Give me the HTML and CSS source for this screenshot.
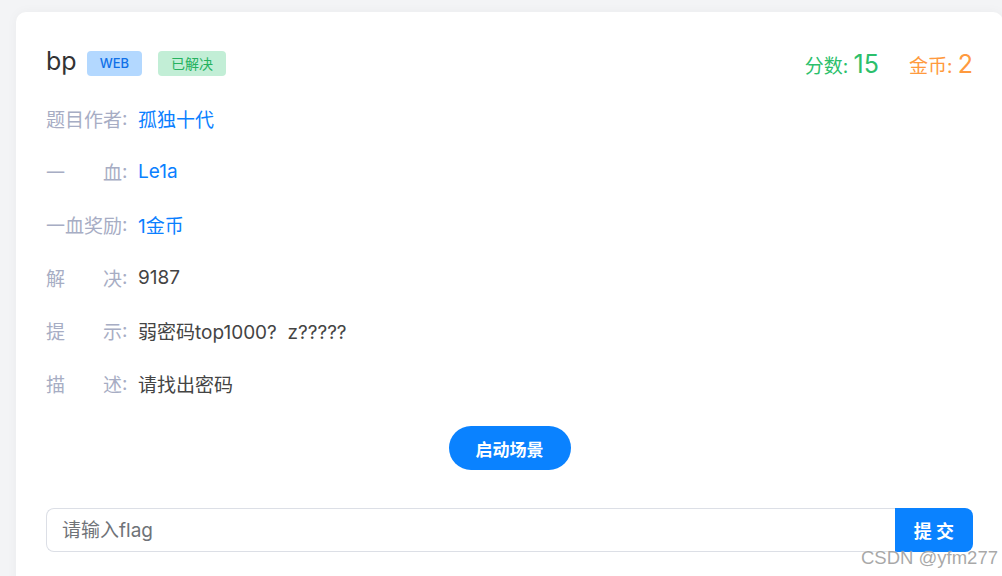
FILE: index.html
```html
<!DOCTYPE html>
<html lang="zh-CN">
<head>
    <meta charset="UTF-8">
    <title>bp - 题目详情</title>
    <link rel="stylesheet" href="styles.css">
</head>
<body>
    <div class="card">
        <div class="head">
            <div class="title">
                <span class="name">bp</span>
                <span class="tag tag-web">WEB</span>
                <span class="tag tag-solved">已解决</span>
            </div>
            <div class="stats">
                <span class="score">分数: <b>15</b></span>
                <span class="coin">金币: <b>2</b></span>
            </div>
        </div>
        <div class="row"><span class="label">题目作者</span><span class="colon">:</span><span class="value blue">孤独十代</span></div>
        <div class="row"><span class="label">一血</span><span class="colon">:</span><span class="value blue">Le1a</span></div>
        <div class="row"><span class="label">一血奖励</span><span class="colon">:</span><span class="value blue">1金币</span></div>
        <div class="row"><span class="label">解决</span><span class="colon">:</span><span class="value">9187</span></div>
        <div class="row"><span class="label">提示</span><span class="colon">:</span><span class="value">弱密码top1000?&nbsp;&nbsp;z?????</span></div>
        <div class="row"><span class="label">描述</span><span class="colon">:</span><span class="value">请找出密码</span></div>
        <div class="actions">
            <button class="start">启动场景</button>
        </div>
        <form class="flag">
            <input type="text" placeholder="请输入flag">
            <button type="button">提 交</button>
        </form>
    </div>
    <div class="watermark">CSDN @yfm277</div>
</body>
</html>
```

FILE: styles.css
```css
body {
    margin: 0;
    background-color: #f3f4f6;
    font-family: Inter, "Noto Sans CJK SC", sans-serif;
    overflow: hidden;
    height: 576px;
    position: relative;
}
.card {
    margin: 12px 0 0 16px;
    width: 927px;
    padding: 38px 30px 40px 30px;
    background-color: #fff;
    border-radius: 10px;
    box-shadow: 0 0 12px rgba(0, 0, 0, 0.04);
}
.head {
    display: flex;
    justify-content: space-between;
    align-items: center;
    height: 27px;
    margin-bottom: 15px;
}
.title {
    display: flex;
    align-items: center;
}
.name {
    font-size: 25px;
    color: #333;
    margin-right: 10px;
    line-height: 26px;
    position: relative;
    top: -3px;
}
.tag {
    height: 25px;
    line-height: 25px;
    font-size: 13px;
    border-radius: 4px;
    padding: 0 13px;
    margin-right: 16px;
}
.tag-web {
    background-color: #b3d8ff;
    color: #1070e8;
    font-weight: 500;
}
.tag-solved {
    background-color: #c2eed6;
    color: #26b25f;
    font-size: 14px;
}
.stats {
    display: flex;
    gap: 30px;
    font-size: 19px;
}
.stats b {
    font-weight: normal;
    font-size: 25px;
}
.score {
    color: #2cbf6c;
}
.coin {
    color: #ff9a3e;
}
.row {
    display: flex;
    align-items: center;
    height: 53px;
    font-size: 19px;
}
.label {
    width: 76px;
    text-align-last: justify;
    color: #a7adc4;
}
.colon {
    width: 6px;
    color: #a7adc4;
}
.value {
    margin-left: 10px;
    color: #444;
}
.blue {
    color: #0a80ff;
}
.actions {
    display: flex;
    justify-content: center;
    margin-top: 16px;
}
.start {
    width: 122px;
    height: 44px;
    border: none;
    border-radius: 22px;
    background-color: #0a82ff;
    color: #fff;
    font-family: inherit;
    font-size: 17px;
    font-weight: bold;
}
.flag {
    display: flex;
    margin-top: 38px;
}
.flag input {
    flex: 1;
    height: 44px;
    box-sizing: border-box;
    border: 1px solid #dcdfe6;
    border-right: none;
    border-radius: 8px 0 0 8px;
    padding: 0 15px;
    font-family: inherit;
    font-size: 19px;
    outline: none;
}
.flag input::placeholder {
    color: #6f7378;
}
.flag button {
    width: 78px;
    height: 44px;
    border: none;
    border-radius: 0 8px 8px 0;
    background-color: #0a82ff;
    color: #fff;
    font-family: inherit;
    font-size: 18px;
    font-weight: bold;
}
.watermark {
    position: absolute;
    right: 4px;
    top: 547px;
    font-family: "Liberation Sans", Arial, sans-serif;
    font-size: 18.5px;
    color: rgba(140, 140, 140, 0.75);
    text-shadow: 0 0 1px rgba(255, 255, 255, 0.8);
}
```
